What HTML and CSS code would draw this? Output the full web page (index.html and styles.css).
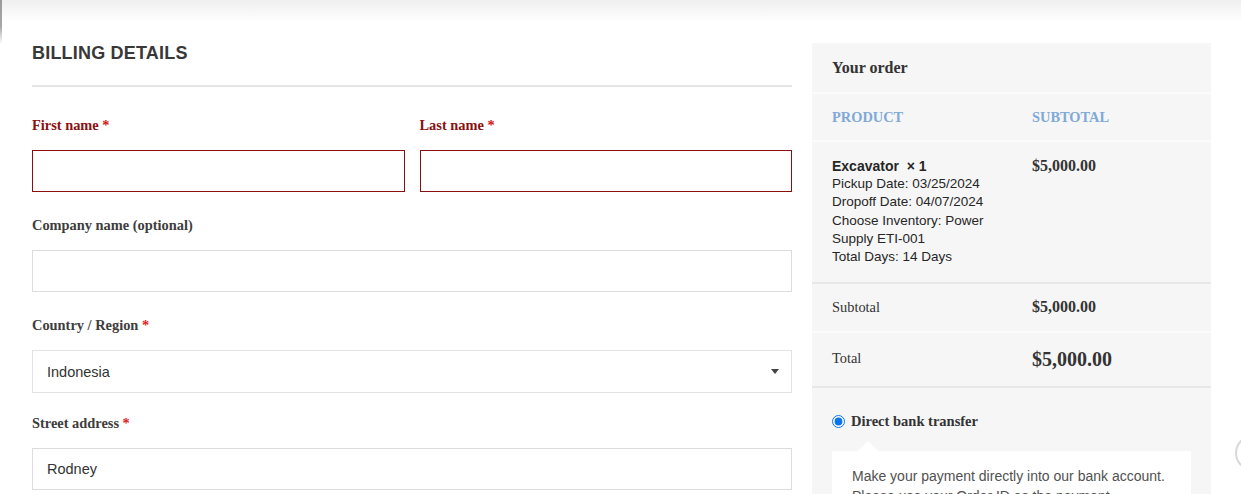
FILE: index.html
```html
<!DOCTYPE html>
<html lang="en">
<head>
<meta charset="utf-8">
<title>Checkout</title>
<link rel="stylesheet" href="styles.css">
</head>
<body>
<div class="edge-line"></div>
<div class="topbar"></div>
<main class="checkout">
  <section class="billing">
    <h3 class="billing-title">BILLING DETAILS</h3>
    <div class="field-row">
      <div class="field invalid">
        <label class="field-label">First name <span class="req">*</span></label>
        <input class="text-input" type="text">
      </div>
      <div class="field invalid">
        <label class="field-label">Last name <span class="req">*</span></label>
        <input class="text-input" type="text">
      </div>
    </div>
    <div class="field">
      <label class="field-label">Company name (optional)</label>
      <input class="text-input" type="text">
    </div>
    <div class="field field-select">
      <label class="field-label">Country / Region <span class="req">*</span></label>
      <div class="select-box">
        <span class="select-value">Indonesia</span>
        <svg class="select-arrow" width="8" height="5" viewBox="0 0 8 5"><polygon points="0,0 8,0 4,5" fill="#444"/></svg>
      </div>
    </div>
    <div class="field">
      <label class="field-label">Street address <span class="req">*</span></label>
      <input class="text-input" type="text" value="Rodney">
    </div>
  </section>

  <aside class="order">
    <div class="order-title">Your order</div>
    <div class="order-row order-headings">
      <div class="col-product">PRODUCT</div>
      <div class="col-subtotal">SUBTOTAL</div>
    </div>
    <div class="order-row order-item">
      <div class="col-product item-details">
        <div class="item-name">Excavator&nbsp; × 1</div>
        <div>Pickup Date: 03/25/2024</div>
        <div>Dropoff Date: 04/07/2024</div>
        <div>Choose Inventory: Power Supply ETI-001</div>
        <div>Total Days: 14 Days</div>
      </div>
      <div class="col-subtotal amount">$5,000.00</div>
    </div>
    <div class="order-row order-subtotal">
      <div class="col-product">Subtotal</div>
      <div class="col-subtotal amount">$5,000.00</div>
    </div>
    <div class="order-row order-total">
      <div class="col-product">Total</div>
      <div class="col-subtotal amount total-amount">$5,000.00</div>
    </div>
    <div class="payment">
      <label class="payment-method">
        <input class="payment-radio" type="radio" name="pay" checked>
        <span>Direct bank transfer</span>
      </label>
      <div class="payment-box">
        Make your payment directly into our bank account. Please use your Order ID as the payment reference. Your order will not be shipped until the funds have cleared in our account.
      </div>
    </div>
  </aside>
</main>
<div class="to-top"></div>
</body>
</html>
```

FILE: styles.css
```css
* { box-sizing: border-box; }

html, body {
  margin: 0;
  padding: 0;
  background: #fff;
  overflow: hidden;
}

body {
  position: relative;
  width: 1241px;
  height: 494px;
  font-family: "Liberation Sans", Arial, sans-serif;
  color: #333;
}

.edge-line {
  position: absolute;
  left: 0;
  top: 0;
  width: 2px;
  height: 44px;
  background: linear-gradient(#9a9a9a 0, #a8a8a8 60%, rgba(200,200,200,0) 100%);
}

.topbar {
  height: 22px;
  background: linear-gradient(#efefef, #ffffff);
}

.checkout {
  display: flex;
  gap: 20px;
  padding: 0 30px 0 32px;
  align-items: flex-start;
}

/* Billing column */
.billing {
  width: 760px;
  flex: none;
}

.billing-title {
  margin: 21px 0 0;
  padding-bottom: 22px;
  border-bottom: 2px solid #e5e5e5;
  font-family: "Liberation Sans", Arial, sans-serif;
  font-size: 18px;
  line-height: 20px;
  font-weight: 700;
  letter-spacing: 0.2px;
  color: #383838;
}

.field-row {
  display: grid;
  grid-template-columns: 1fr 1fr;
  gap: 15px;
  margin-top: 28px;
}

.field {
  display: flex;
  flex-direction: column;
  margin-bottom: 23px;
}

.field-row .field { margin-bottom: 23px; }

.field-select { margin-bottom: 20px; }

.field-label {
  font-family: "Liberation Serif", "Times New Roman", serif;
  font-size: 14.4px;
  font-weight: 700;
  line-height: 20px;
  color: #3d3d3d;
  margin-bottom: 15px;
}

.field.invalid .field-label { color: #8b0f0f; }

.req { color: #e01b1b; }
.field.invalid .req { color: #d11414; }

.text-input {
  display: block;
  width: 100%;
  height: 42px;
  margin: 0;
  padding: 0 14px;
  border: 1px solid #dcdcdc;
  border-radius: 0;
  background: #fff;
  font-family: "Liberation Sans", Arial, sans-serif;
  font-size: 14.5px;
  color: #333;
  outline: none;
}

.field.invalid .text-input { border-color: #8b0f0f; }

.select-box {
  display: flex;
  align-items: center;
  justify-content: space-between;
  height: 43px;
  padding: 0 12px 0 14px;
  border: 1px solid #e3e3e3;
  background: #fff;
  font-size: 14.5px;
  color: #333;
}

.select-arrow { display: block; }

/* Order column */
.order {
  width: 399px;
  flex: none;
  margin-top: 21px;
  background: #f6f6f6;
}

.order-title {
  height: 51px;
  padding: 0 20px;
  display: flex;
  align-items: center;
  border-bottom: 2px solid #fbfbfb;
  font-family: "Liberation Serif", "Times New Roman", serif;
  font-size: 16px;
  font-weight: 700;
  color: #333;
}

.order-row {
  display: flex;
  font-family: "Liberation Serif", "Times New Roman", serif;
}

.col-product {
  width: 220px;
  flex: none;
  padding: 0 20px;
}

.col-subtotal {
  flex: 1;
  padding-right: 20px;
}

.order-headings {
  height: 48px;
  align-items: center;
  border-bottom: 2px solid #fbfbfb;
  font-size: 14.4px;
  font-weight: 700;
  color: #80a9d8;
}

.order-item {
  padding: 15px 0 16px;
  border-bottom: 2px solid #e8e8e8;
  align-items: flex-start;
}

.item-details {
  font-family: "Liberation Sans", Arial, sans-serif;
  font-size: 13.5px;
  line-height: 18.2px;
  color: #262626;
}

.item-name {
  font-size: 14px;
  font-weight: 700;
}

.amount {
  font-size: 16px;
  font-weight: 700;
  line-height: 18px;
  color: #333;
}

.order-subtotal {
  height: 49px;
  align-items: center;
  border-bottom: 2px solid #fbfbfb;
  font-size: 14.4px;
  color: #333;
  padding-bottom: 1px;
}

.order-total {
  height: 55px;
  align-items: center;
  border-bottom: 2px solid #e8e8e8;
  font-size: 14.4px;
  color: #333;
  padding-bottom: 2px;
}

.total-amount {
  font-size: 20px;
  line-height: 24px;
}

.payment {
  padding: 24px 20px 0;
}

.payment-method {
  display: flex;
  align-items: center;
  gap: 6px;
  height: 18px;
  font-family: "Liberation Serif", "Times New Roman", serif;
  font-size: 14.5px;
  font-weight: 700;
  color: #333;
}

.payment-radio {
  width: 13px;
  height: 13px;
  margin: 0;
  accent-color: #0a74f0;
}

.payment-box {
  position: relative;
  margin-top: 21px;
  background: #fff;
  padding: 15px 20px;
  font-family: "Liberation Sans", Arial, sans-serif;
  font-size: 14px;
  line-height: 20px;
  color: #515151;
}

.payment-box::before {
  content: "";
  position: absolute;
  left: 26px;
  top: -20px;
  border: 10px solid transparent;
  border-bottom-color: #fff;
}

.to-top {
  position: absolute;
  left: 1235px;
  top: 435px;
  width: 36px;
  height: 36px;
  border-radius: 50%;
  border: 2px solid #d8d8d8;
  background: #fff;
}
```
